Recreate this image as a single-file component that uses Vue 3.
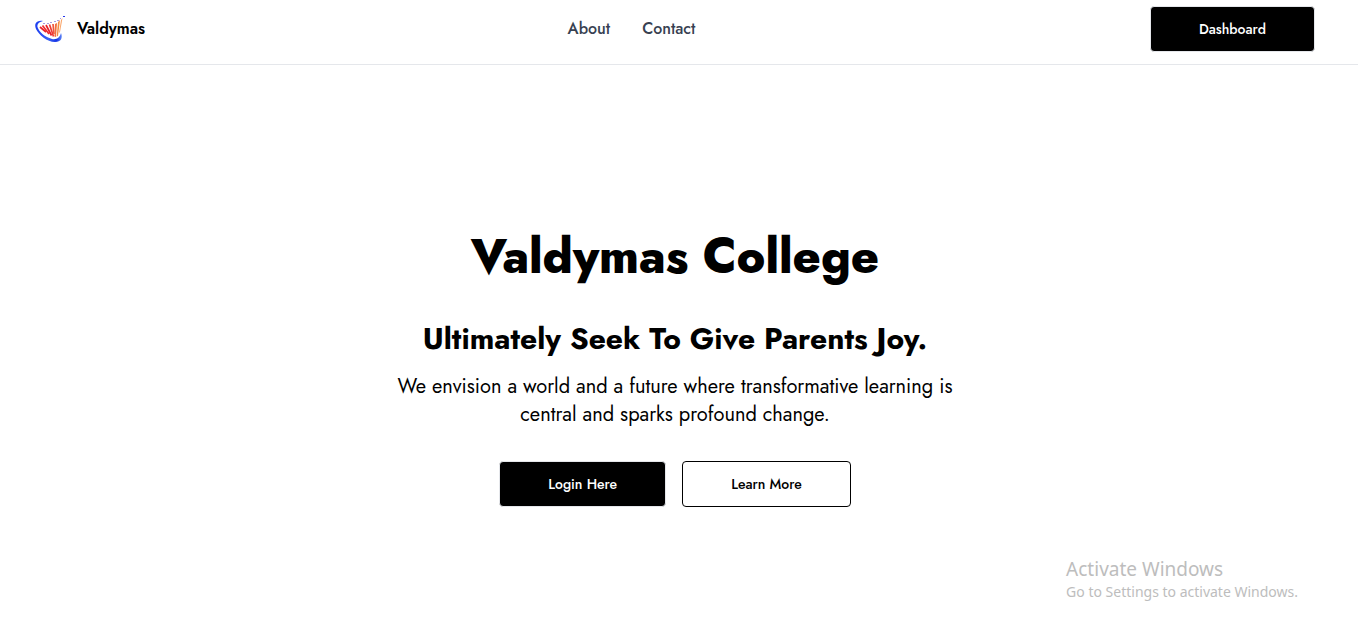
<script setup>
const links = [
  { label: 'About', href: '#about' },
  { label: 'Contact', href: '#contact' },
]
</script>

<template>
  <div class="page">
    <header class="bar">
      <a class="brand" href="#home">
        <svg class="logo" viewBox="0 0 31 28" aria-hidden="true">
          <defs>
            <linearGradient id="swoosh" x1="0" x2="1">
              <stop offset="0" stop-color="#1c3df0" />
              <stop offset="0.5" stop-color="#3a62f2" />
              <stop offset="0.8" stop-color="#1434e6" />
              <stop offset="1" stop-color="#5f86f5" />
            </linearGradient>
          </defs>
          <path d="M9 6C2 5 0 9 2 14C5 20 13 27 21 27C27 27 29 23 27 18C26 22 23 25 18 24C11 22 5 17 3.500 12C3 9 5 7 9 6Z" fill="url(#swoosh)" />
          <g fill="none" stroke-width="1.700">
            <path d="M6 12L12 17" stroke="#e8222c" />
            <path d="M8.500 10.500L15 19" stroke="#ee2a2c" />
            <path d="M12 10L17.500 20.500" stroke="#e81f28" />
            <path d="M15.500 9.500L19.500 21.500" stroke="#ee3a34" />
            <path d="M19 9L20 19" stroke="#f0543c" />
          </g>
          <path d="M21 9L23 8L22 22L20.500 21.500Z" fill="#f2703f" />
          <path d="M24 7L26 5L24 21L22.700 21.500Z" fill="#f58a42" />
          <path d="M27 5L28.500 3L26 17L25 18Z" fill="#f9a468" />
          <g fill="#a99be0">
            <rect x="9" y="8" width="2" height="1" />
            <rect x="13" y="8" width="2" height="1" />
            <rect x="16" y="7" width="2" height="1" />
            <rect x="20" y="6" width="2" height="1" />
            <rect x="23" y="5" width="2" height="1" />
            <rect x="26" y="3" width="1" height="1" />
          </g>
          <rect x="29" y="1" width="2" height="1" fill="#2537ea" />
        </svg>
        <span>Valdymas</span>
      </a>
      <nav class="links">
        <a v-for="link in links" :key="link.label" :href="link.href">{{ link.label }}</a>
      </nav>
      <button class="btn solid" type="button">Dashboard</button>
    </header>

    <main class="hero">
      <h1>Valdymas College</h1>
      <h2>Ultimately Seek To Give Parents Joy.</h2>
      <p>We envision a world and a future where transformative learning is central and sparks profound change.</p>
      <div class="actions">
        <button class="btn solid" type="button">Login Here</button>
        <button class="btn outline" type="button">Learn More</button>
      </div>
    </main>

    <aside class="notice">
      <div class="notice-title">Activate Windows</div>
      <div>Go to Settings to activate Windows.</div>
    </aside>
  </div>
</template>

<style>
body {
  background: #fff;
}
</style>

<style scoped>
.page {
  position: relative;
  box-sizing: border-box;
  min-height: 100vh;
  color: #000;
  font-family: Jost, Lato, sans-serif;
}
.bar {
  display: flex;
  align-items: center;
  justify-content: space-between;
  padding: 6px 43px 12px 34px;
  border-bottom: 1px solid #e5e7eb;
}
.brand {
  display: flex;
  align-items: center;
  gap: 12px;
  color: #000;
  font-size: 16px;
  font-weight: 600;
  line-height: 24px;
  text-decoration: none;
}
.logo {
  width: 31px;
  height: 28px;
}
.links {
  display: flex;
}
.links a {
  margin-right: 32px;
  color: #374151;
  font-size: 16px;
  font-weight: 500;
  line-height: 24px;
  text-decoration: none;
}
.btn {
  padding: 12px 48px;
  border: 1px solid #e5e7eb;
  border-radius: 4px;
  font-family: inherit;
  font-size: 14px;
  font-weight: 500;
  line-height: 20px;
}
.solid {
  background: #000;
  color: #fff;
}
.outline {
  border-color: #000;
  background: #fff;
  color: #000;
}
.hero {
  display: flex;
  flex-direction: column;
  align-items: center;
  padding: 168px 8px 0 0;
  text-align: center;
}
h1 {
  margin: 0 0 40px;
  font-size: 48px;
  font-weight: 800;
  line-height: 48px;
}
h2 {
  margin: 0 0 16px;
  font-size: 30px;
  font-weight: 700;
  line-height: 36px;
}
p {
  max-width: 576px;
  margin: 0 0 32px;
  font-size: 20px;
  font-weight: 400;
  line-height: 28px;
}
.actions {
  display: flex;
  gap: 16px;
}
.notice {
  position: absolute;
  right: 60px;
  bottom: 25px;
  color: #bdbdbd;
  font-family: "Segoe UI", "Noto Sans", sans-serif;
  font-size: 14px;
  line-height: 20px;
}
.notice-title {
  font-size: 19px;
  line-height: 26px;
}
</style>
